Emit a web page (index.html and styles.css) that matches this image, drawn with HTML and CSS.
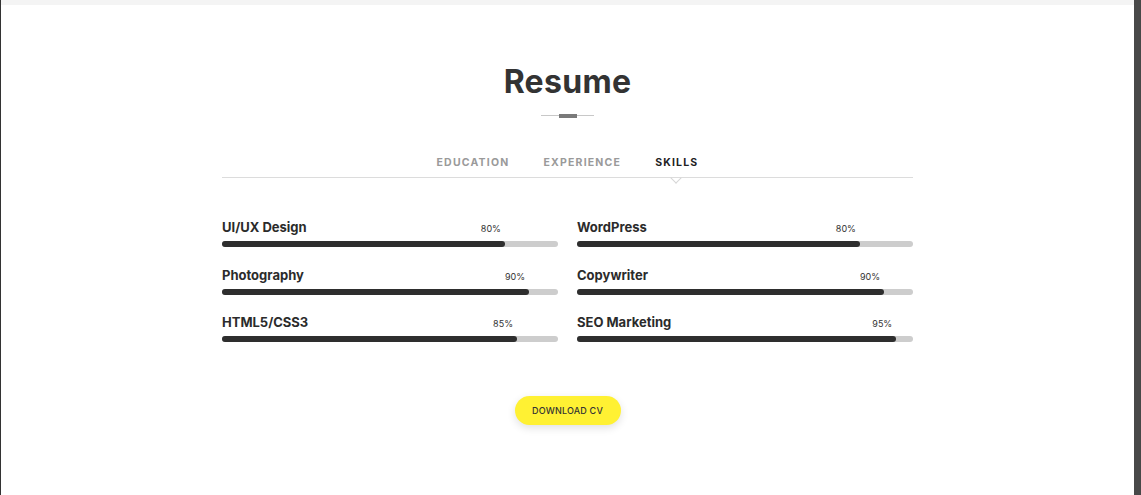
FILE: index.html
```html
<!DOCTYPE html>
<html lang="en">
<head>
<meta charset="utf-8">
<title>Resume</title>
<link rel="stylesheet" href="styles.css">
</head>
<body>
<div class="frame">
  <main class="page">
    <div class="topstrip"></div>
    <section class="resume">
      <h1 class="title">Resume</h1>
      <div class="divider"><span class="divider-mark"></span></div>
      <nav class="tabs">
        <span class="tab">EDUCATION</span>
        <span class="tab">EXPERIENCE</span>
        <span class="tab tab-active">SKILLS</span>
      </nav>
      <div class="skills">
        <div class="skill">
          <div class="skill-head" style="width:84.2%"><span class="skill-name">UI/UX Design</span><span class="skill-pct">80%</span></div>
          <div class="track"><div class="fill" style="width:84.2%"></div></div>
        </div>
        <div class="skill">
          <div class="skill-head" style="width:84.2%"><span class="skill-name">WordPress</span><span class="skill-pct">80%</span></div>
          <div class="track"><div class="fill" style="width:84.2%"></div></div>
        </div>
        <div class="skill">
          <div class="skill-head" style="width:91.4%"><span class="skill-name">Photography</span><span class="skill-pct">90%</span></div>
          <div class="track"><div class="fill" style="width:91.4%"></div></div>
        </div>
        <div class="skill">
          <div class="skill-head" style="width:91.4%"><span class="skill-name">Copywriter</span><span class="skill-pct">90%</span></div>
          <div class="track"><div class="fill" style="width:91.4%"></div></div>
        </div>
        <div class="skill">
          <div class="skill-head" style="width:87.8%"><span class="skill-name">HTML5/CSS3</span><span class="skill-pct">85%</span></div>
          <div class="track"><div class="fill" style="width:87.8%"></div></div>
        </div>
        <div class="skill">
          <div class="skill-head" style="width:95%"><span class="skill-name">SEO Marketing</span><span class="skill-pct">95%</span></div>
          <div class="track"><div class="fill" style="width:95%"></div></div>
        </div>
      </div>
      <div class="actions">
        <a class="btn" href="#">DOWNLOAD CV</a>
      </div>
    </section>
  </main>
  <div class="sidebar"></div>
</div>
</body>
</html>
```

FILE: styles.css
```css
* { box-sizing: border-box; }
html, body { margin: 0; padding: 0; }
body {
  background: #fff;
  font-family: "Inter", "Open Sans", "Liberation Sans", sans-serif;
  color: #333;
}
.frame {
  display: flex;
  height: 495px;
  border-left: 1px solid #333;
  overflow: hidden;
}
.page {
  flex: 1;
  display: flex;
  flex-direction: column;
}
.topstrip {
  height: 5px;
  background: #f4f4f4;
}
.sidebar {
  width: 7px;
  background: #484848;
}
.resume {
  width: 691px;
  margin: 0 auto;
  padding-top: 57px;
}
.title {
  margin: 0;
  text-align: center;
  font-size: 32px;
  line-height: 40px;
  font-weight: 700;
  color: #333;
  letter-spacing: 0.3px;
}
.divider {
  width: 53px;
  height: 1px;
  background: #c8c8c8;
  margin: 13px auto 0;
  display: flex;
  justify-content: center;
  align-items: center;
}
.divider-mark {
  width: 18px;
  height: 4px;
  background: #7a7a7a;
}
.tabs {
  display: flex;
  justify-content: center;
  border-bottom: 1px solid #dcdcdc;
  margin-top: 40px;
}
.tab {
  position: relative;
  padding: 0 17px 8px;
  font-size: 10.5px;
  line-height: 13px;
  font-weight: 700;
  letter-spacing: 1.2px;
  color: #9a9a9a;
}
.tab-active { color: #222; }
.tab-active::after {
  content: "";
  position: absolute;
  left: 50%;
  bottom: -5px;
  width: 7px;
  height: 7px;
  margin-left: -5px;
  border-right: 1px solid #d6d6d6;
  border-bottom: 1px solid #d6d6d6;
  transform: rotate(45deg);
}
.skills {
  display: grid;
  grid-template-columns: 1fr 1fr;
  column-gap: 19px;
  row-gap: 18.5px;
  margin-top: 40px;
}
.skill-head {
  display: flex;
  justify-content: space-between;
  align-items: baseline;
  padding-right: 4px;
  line-height: 18px;
  margin-bottom: 3px;
}
.skill-name {
  font-size: 13px;
  font-weight: 700;
  color: #2b2b2b;
  white-space: nowrap;
}
.skill-pct {
  font-size: 9px;
  color: #333;
}
.track {
  height: 6px;
  border-radius: 3px;
  background: #cdcdcd;
}
.fill {
  height: 6px;
  border-radius: 3px;
  background: #2e2e2e;
}
.actions {
  display: flex;
  justify-content: center;
  margin-top: 54px;
}
.btn {
  display: inline-flex;
  align-items: center;
  justify-content: center;
  width: 106px;
  height: 29px;
  border-radius: 15px;
  background: #fff133;
  color: #333;
  font-size: 9px;
  font-weight: 500;
  letter-spacing: 0.2px;
  text-decoration: none;
  box-shadow: 0 3px 8px rgba(0,0,0,0.12);
}
```
